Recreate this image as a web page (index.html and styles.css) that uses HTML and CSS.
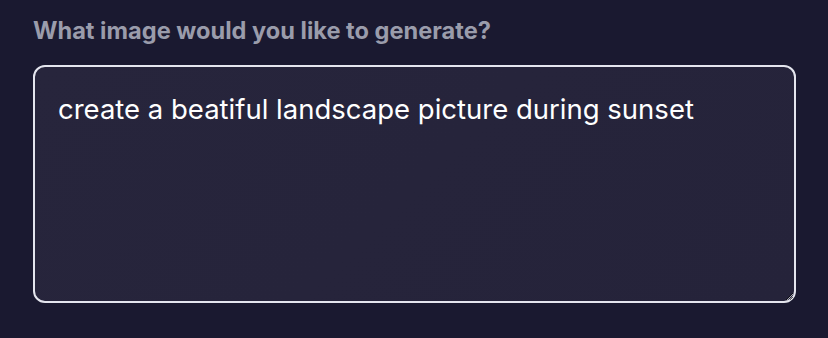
FILE: index.html
```html
<!DOCTYPE html>
<html lang="en">
<head>
<meta charset="utf-8">
<link rel="stylesheet" href="styles.css">
</head>
<body>
<main class="page">
  <label class="label" for="prompt">What image would you like to generate?</label>
  <textarea id="prompt" class="prompt">create a beatiful landscape picture during sunset</textarea>
</main>
</body>
</html>
```
FILE: styles.css
```css
html, body {
  margin: 0;
  padding: 0;
  background: #1a1930;
  height: 100%;
}
.page {
  display: flex;
  flex-direction: column;
  padding: 17px 33px 0 33px;
  font-family: Inter, "Noto Sans", sans-serif;
}
.label {
  font-size: 23.6px;
  font-weight: 700;
  color: #9a9cab;
  line-height: 28px;
  margin-bottom: 20px;
}
.prompt {
  box-sizing: border-box;
  width: 763px;
  height: 238px;
  border: 2px solid #e4e5ee;
  border-radius: 12px;
  background: linear-gradient(135deg, #27253c, #25233a);
  color: #ffffff;
  font-family: Inter, "Noto Sans", sans-serif;
  font-size: 27.5px;
  line-height: 36px;
  padding: 24px 23px;
  resize: vertical;
  outline: none;
  margin: 0;
}
```
